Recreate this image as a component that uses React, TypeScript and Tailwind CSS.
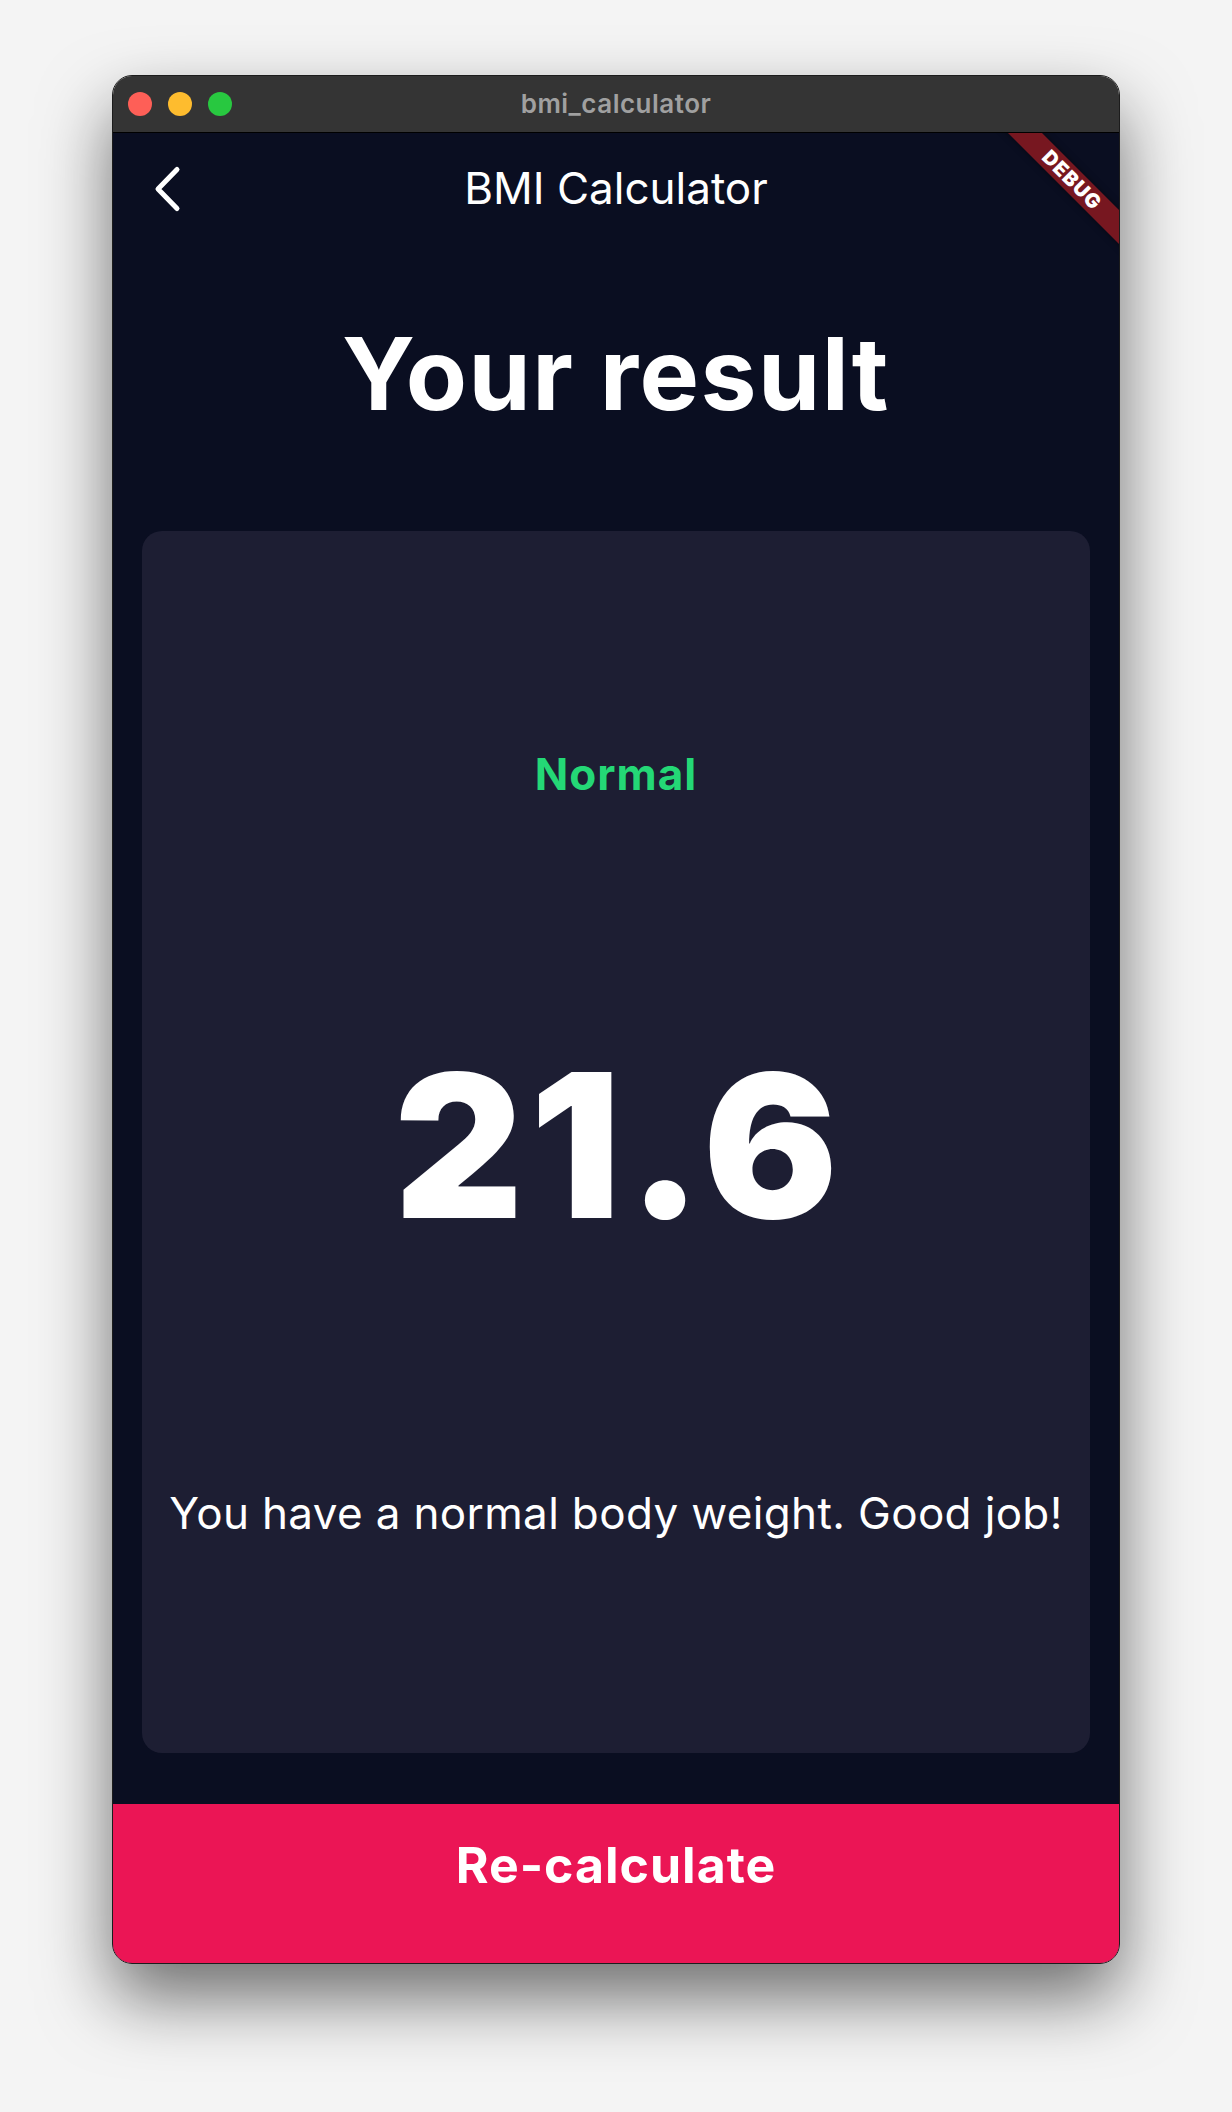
import React from 'react';

const BackChevron: React.FC = () => (
  <svg width="30" height="48" viewBox="0 0 30 48" fill="none">
    <path d="M24 4.5 L5 24 L24 43.5" stroke="white" strokeWidth="5" strokeLinecap="round" strokeLinejoin="round" />
  </svg>
);

const App: React.FC = () => {
  return (
    <div className="min-h-[2112px] w-[1232px] bg-[#f4f4f4] pt-[75px] font-['Inter','Noto_Sans',sans-serif]">
      <div className="mx-auto flex h-[1889px] w-[1008px] flex-col overflow-hidden rounded-[20px] border border-[#1c1c1c] shadow-[0_34px_70px_rgba(0,0,0,0.55)]">
        {/* title bar */}
        <div className="relative flex h-[57px] shrink-0 items-center border-b border-black bg-[#343434]">
          <div className="ml-[15px] flex gap-[16px]">
            <span className="h-[24px] w-[24px] rounded-full bg-[#fe5f57]" />
            <span className="h-[24px] w-[24px] rounded-full bg-[#febc2e]" />
            <span className="h-[24px] w-[24px] rounded-full bg-[#28c840]" />
          </div>
          <div className="absolute inset-x-0 top-[12px] text-center text-[26px] font-semibold leading-[32px] tracking-[0.5px] text-[#a0a0a0]">
            bmi_calculator
          </div>
        </div>

        {/* app content */}
        <div className="relative flex flex-1 flex-col overflow-hidden bg-[#0a0e21]">
          <div className="absolute right-[-83px] top-[35px] flex h-[24px] w-[260px] rotate-45 items-center justify-center bg-[#771720] shadow-[0_0_6px_rgba(0,0,0,0.5)]">
            <span className="text-[20px] font-black leading-none tracking-[1px] text-white">DEBUG</span>
          </div>

          <div className="relative flex h-[112px] shrink-0 items-center">
            <div className="ml-[40px] flex">
              <BackChevron />
            </div>
            <div className="absolute inset-x-0 top-[33px] text-center text-[44px] font-normal leading-[44px] text-white">
              BMI Calculator
            </div>
          </div>

          <div className="h-[286px] shrink-0 pt-[79px]">
            <h1 className="text-center text-[100px] font-bold leading-[100px] tracking-[1.5px] text-white">Your result</h1>
          </div>

          <div className="mx-[29px] flex h-[1222px] shrink-0 flex-col items-center rounded-[20px] bg-[#1d1e33] pt-[221px]">
            <div className="text-[44px] font-bold leading-[44px] tracking-[1px] text-[#24d876]">Normal</div>
            <div className="mt-[249px] pl-[7px] text-[200px] font-black leading-[200px] tracking-[7px] text-white">21.6</div>
            <div className="mt-[246px] text-[44px] leading-[44px] tracking-[0.35px] text-white">You have a normal body weight. Good job!</div>
          </div>

          <div className="mt-[51px] flex flex-1 items-start justify-center bg-[#eb1555] pt-[36px]">
            <span className="text-[50px] font-bold leading-[50px] tracking-[1px] text-white">Re-calculate</span>
          </div>
        </div>
      </div>
    </div>
  );
};

export default App;
